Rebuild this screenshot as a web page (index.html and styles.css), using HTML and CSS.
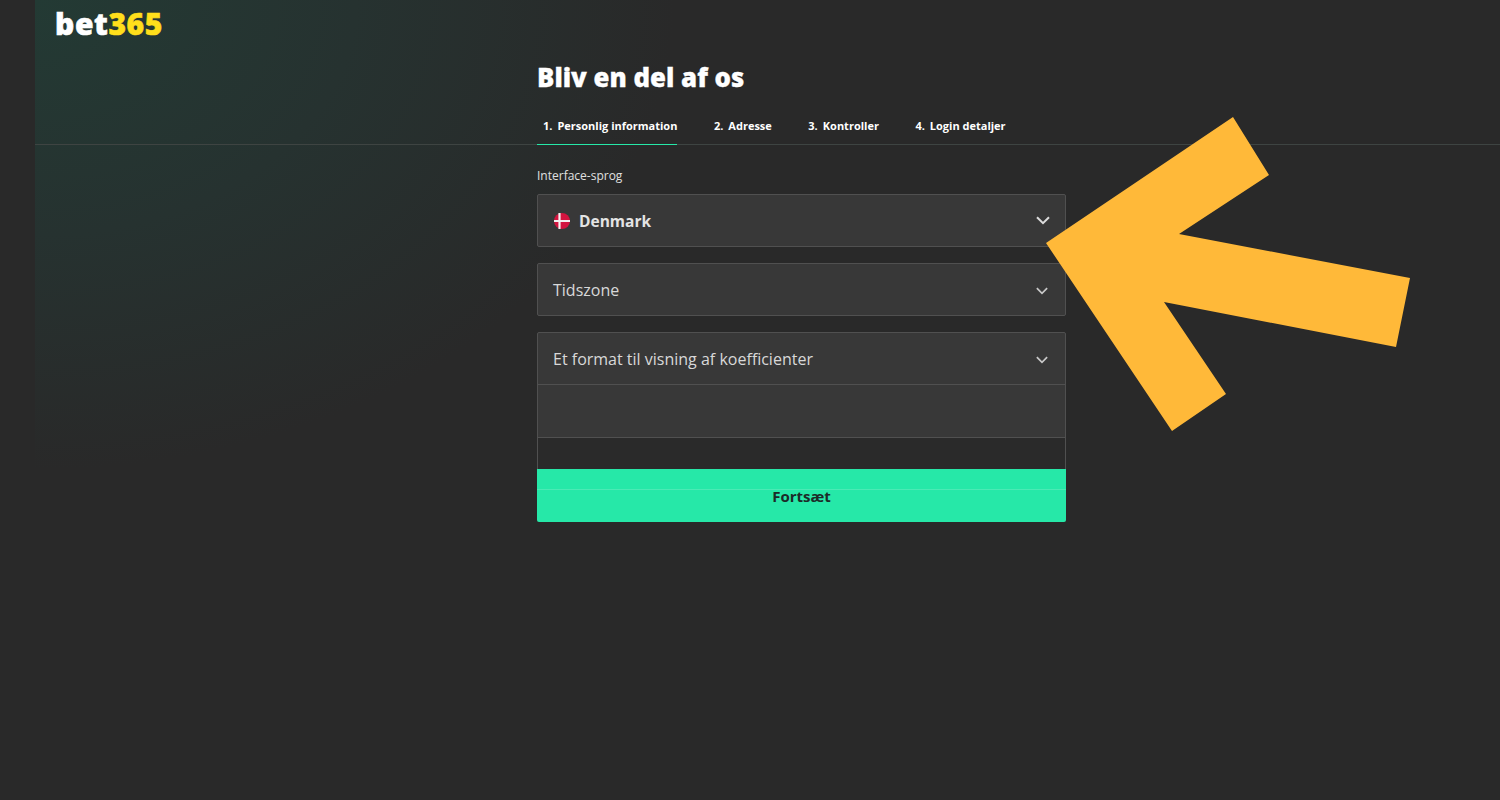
FILE: index.html
```html
<!DOCTYPE HTML>
<html>
<head>
<title>bet365 - Bliv en del af os</title>
<link rel="stylesheet" href="styles.css">
</head>
<body>
<div class="page">
	<div class="top-glow"></div>
	<div class="logo">bet<span class="logo-num">365</span></div>
	<h1 class="title">Bliv en del af os</h1>
	<div class="steps">
		<div class="step active"><span>1.</span>Personlig information</div>
		<div class="step"><span>2.</span>Adresse</div>
		<div class="step"><span>3.</span>Kontroller</div>
		<div class="step"><span>4.</span>Login detaljer</div>
	</div>
	<form class="reg-form">
		<label class="field-label">Interface-sprog</label>
		<div class="select bold">
			<svg class="flag" viewBox="0 0 16 16" width="16" height="16">
				<circle cx="8" cy="8" r="8" fill="#d3143f"/>
				<path d="M0 6.9h16v2.2H0zM4.4 0h2.2v16H4.4z" fill="#f4f0f0"/>
			</svg>
			Denmark
			<svg class="chev" viewBox="0 0 14 9" width="14" height="9"><path d="M1 1.2l6 6 6-6" fill="none" stroke="#dcdcdc" stroke-width="2"/></svg>
		</div>
		<div class="select">
			Tidszone
			<svg class="chev small" viewBox="0 0 14 9" width="12" height="8"><path d="M1 1.2l6 6 6-6" fill="none" stroke="#c8c8c8" stroke-width="2"/></svg>
		</div>
		<div class="select joined">
			Et format til visning af koefficienter
			<svg class="chev small" viewBox="0 0 14 9" width="12" height="8"><path d="M1 1.2l6 6 6-6" fill="none" stroke="#c8c8c8" stroke-width="2"/></svg>
		</div>
		<div class="select blank"></div>
		<div class="select hidden-row"></div>
		<button type="button" class="submit">Fortsæt</button>
	</form>
	<svg class="arrow" viewBox="0 0 1500 800" width="1500" height="800">
		<polygon points="1046,243 1233,117 1269,175 1179,234 1410,278 1396,347 1164,302 1226,394 1172,431" fill="#ffb939"/>
	</svg>
</div>
</body>
</html>
```

FILE: styles.css
```css
body{
	margin: 0;
	background: #292929;
	font-family: "Open Sans", "Noto Sans", sans-serif;
	color: #e4e4e4;
}
.page{
	position: relative;
	width: 1500px;
	height: 800px;
	overflow: hidden;
}
.top-glow{
	position: absolute;
	left: 35px;
	top: 0;
	width: 640px;
	height: 470px;
	background: radial-gradient(ellipse farthest-side at 0 0, #233a34 0%, #263230 50%, #292929 100%);
}
.logo{
	position: relative;
	height: 49px;
	padding-left: 55px;
	font-size: 30px;
	line-height: 47px;
	font-weight: 800;
	letter-spacing: 0.6px;
	-webkit-text-stroke: 0.6px;
	color: #ffffff;
}
.logo-num{
	color: #ffdf1b;
}
.title{
	position: relative;
	margin: 0;
	padding: 9px 0 0 537px;
	font-size: 25.8px;
	line-height: 38px;
	font-weight: 800;
	-webkit-text-stroke: 0.3px;
	color: #ffffff;
}
.steps{
	position: relative;
	display: flex;
	gap: 36.5px;
	height: 48px;
	margin-left: 35px;
	padding-left: 502px;
	border-bottom: 1px solid #3e4442;
}
.step{
	height: 25px;
	padding-top: 23px;
	font-size: 11px;
	line-height: 14px;
	font-weight: 700;
	color: #ffffff;
}
.step span{
	margin-right: 5px;
}
.step.active{
	padding-left: 6px;
	border-bottom: 1px solid #26e8a8;
}
.reg-form{
	position: relative;
	width: 529px;
	margin: 23px 0 0 537px;
}
.field-label{
	display: block;
	font-size: 12px;
	line-height: 16px;
	color: #e0e0e0;
	margin-bottom: 10px;
}
.select{
	display: flex;
	align-items: center;
	box-sizing: border-box;
	height: 53px;
	margin-bottom: 16px;
	padding: 0 16px 0 15px;
	background: #383838;
	border: 1px solid #505050;
	border-radius: 2px;
	font-size: 16px;
	color: #d8d8d8;
}
.select.bold{
	font-size: 15.5px;
	font-weight: 700;
	color: #e4e4e4;
}
.flag{
	margin: 0 9px 0 1px;
}
.chev{
	margin-left: auto;
	margin-right: -1px;
}
.chev.small{
	margin-top: 3px;
	margin-right: 1px;
}
.select.joined{
	margin-bottom: 0;
	border-radius: 2px 2px 0 0;
}
.select.blank{
	height: 54px;
	margin: -1px 0 0 0;
	border-radius: 0;
}
.select.hidden-row{
	height: 32px;
	margin: -1px 0 0 0;
	background: #2a2a2a;
	border-bottom: 0;
	border-radius: 0;
}
.submit{
	display: block;
	width: 529px;
	height: 53px;
	padding: 0;
	background: linear-gradient(#26e8a8 0, #26e8a8 20px, #4beab5 20px, #4beab5 21px, #26e8a8 21px);
	border: 0;
	border-radius: 0 0 2px 2px;
	font-family: "Open Sans", "Noto Sans", sans-serif;
	font-size: 15px;
	font-weight: 700;
	color: #1c2b28;
}
.arrow{
	position: absolute;
	left: 0;
	top: 0;
}
```
